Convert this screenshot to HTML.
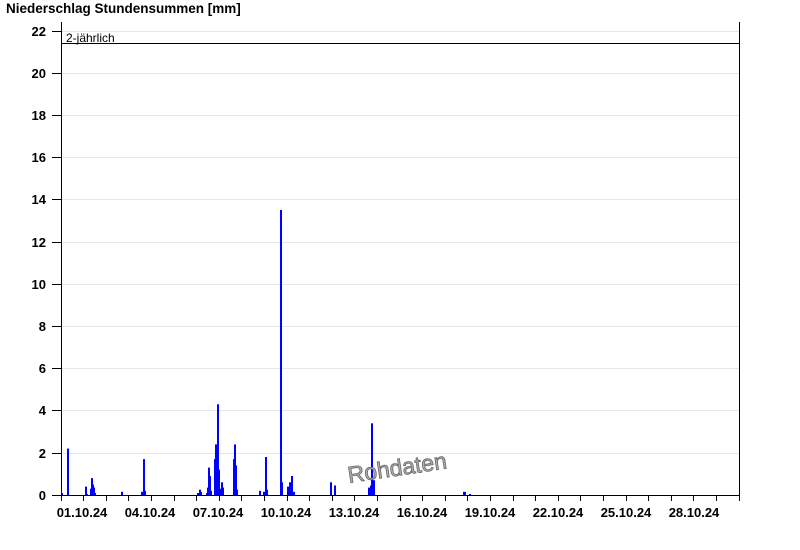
<!DOCTYPE html>
<html><head><meta charset="utf-8"><style>
html,body{margin:0;padding:0;background:#fff;}
svg{display:block;font-family:"Liberation Sans",Arial,sans-serif;}
</style></head><body>
<svg width="800" height="550" viewBox="0 0 800 550" xmlns="http://www.w3.org/2000/svg">
<text x="6" y="13" font-size="13.5" font-weight="bold" fill="#000">Niederschlag Stundensummen [mm]</text>
<g stroke="#e6e6e6" stroke-width="1">
<line x1="61" y1="31.5" x2="739" y2="31.5"/>
<line x1="61" y1="73.5" x2="739" y2="73.5"/>
<line x1="61" y1="115.5" x2="739" y2="115.5"/>
<line x1="61" y1="157.5" x2="739" y2="157.5"/>
<line x1="61" y1="199.5" x2="739" y2="199.5"/>
<line x1="61" y1="242.5" x2="739" y2="242.5"/>
<line x1="61" y1="284.5" x2="739" y2="284.5"/>
<line x1="61" y1="326.5" x2="739" y2="326.5"/>
<line x1="61" y1="368.5" x2="739" y2="368.5"/>
<line x1="61" y1="410.5" x2="739" y2="410.5"/>
<line x1="61" y1="453.5" x2="739" y2="453.5"/>
</g>
<g fill="#0000ff">
<rect x="61" y="493" width="2" height="2"/>
<rect x="67" y="448.6" width="2" height="46.4"/>
<rect x="85" y="486.6" width="2" height="8.4"/>
<rect x="87" y="494" width="1" height="1"/>
<rect x="90" y="488.7" width="1" height="6.3"/>
<rect x="91" y="478.1" width="2" height="16.9"/>
<rect x="93" y="484.5" width="1" height="10.5"/>
<rect x="94" y="487.6" width="1" height="7.4"/>
<rect x="95" y="493" width="1" height="2"/>
<rect x="121" y="491.8" width="2" height="3.2"/>
<rect x="141" y="491.8" width="2" height="3.2"/>
<rect x="143" y="459.1" width="2" height="35.9"/>
<rect x="145" y="490.8" width="1" height="4.2"/>
<rect x="197" y="493" width="2" height="2"/>
<rect x="199" y="489.7" width="2" height="5.3"/>
<rect x="201" y="492" width="1" height="3"/>
<rect x="206" y="493" width="1" height="2"/>
<rect x="207" y="487.6" width="1" height="7.4"/>
<rect x="208" y="467.6" width="2" height="27.4"/>
<rect x="210" y="476" width="1" height="19"/>
<rect x="211" y="490.8" width="1" height="4.2"/>
<rect x="214" y="459.1" width="1" height="35.9"/>
<rect x="215" y="444.4" width="2" height="50.6"/>
<rect x="217" y="404.3" width="2" height="90.7"/>
<rect x="219" y="469.7" width="1" height="25.3"/>
<rect x="220" y="488.7" width="1" height="6.3"/>
<rect x="221" y="482.3" width="2" height="12.7"/>
<rect x="223" y="487.6" width="1" height="7.4"/>
<rect x="233" y="459.1" width="1" height="35.9"/>
<rect x="234" y="444.4" width="2" height="50.6"/>
<rect x="236" y="465.5" width="1" height="29.5"/>
<rect x="237" y="489.7" width="1" height="5.3"/>
<rect x="259" y="490.8" width="2" height="4.2"/>
<rect x="263" y="491.8" width="2" height="3.2"/>
<rect x="265" y="457" width="2" height="38"/>
<rect x="267" y="489.7" width="1" height="5.3"/>
<rect x="280" y="210" width="2" height="285"/>
<rect x="282" y="482.3" width="1" height="12.7"/>
<rect x="287" y="486.6" width="2" height="8.4"/>
<rect x="289" y="482.3" width="2" height="12.7"/>
<rect x="291" y="476" width="2" height="19"/>
<rect x="293" y="491.8" width="2" height="3.2"/>
<rect x="330" y="482.3" width="2" height="12.7"/>
<rect x="334" y="485.5" width="2" height="9.5"/>
<rect x="368" y="487.6" width="2" height="7.4"/>
<rect x="370" y="485.5" width="1" height="9.5"/>
<rect x="371" y="423.3" width="2" height="71.7"/>
<rect x="373" y="480.2" width="2" height="14.8"/>
<rect x="463" y="491.8" width="3" height="3.2"/>
<rect x="469" y="494" width="2" height="1"/>
</g>
<line x1="61" y1="43.5" x2="739" y2="43.5" stroke="#000" stroke-width="1"/>
<text x="66" y="42" font-size="12" fill="#000">2-jährlich</text>
<g stroke="#000" stroke-width="1">
<line x1="61.5" y1="22" x2="61.5" y2="495"/>
<line x1="739.5" y1="22" x2="739.5" y2="495"/>
<line x1="52" y1="495.5" x2="740" y2="495.5"/>
<path d="M52 31.5h9M52 73.5h9M52 115.5h9M52 157.5h9M52 199.5h9M52 242.5h9M52 284.5h9M52 326.5h9M52 368.5h9M52 410.5h9M52 453.5h9"/>
<path d="M61.5 495v6M83.5 495v6M106.5 495v6M128.5 495v6M151.5 495v6M174.5 495v6M196.5 495v6M219.5 495v6M241.5 495v6M264.5 495v6M287.5 495v6M309.5 495v6M332.5 495v6M354.5 495v6M377.5 495v6M400.5 495v6M422.5 495v6M445.5 495v6M467.5 495v6M490.5 495v6M513.5 495v6M535.5 495v6M558.5 495v6M580.5 495v6M603.5 495v6M626.5 495v6M648.5 495v6M671.5 495v6M693.5 495v6M716.5 495v6M739.5 495v6"/>
</g>
<g font-size="13" font-weight="bold" text-anchor="end" fill="#000">
<text x="46" y="36">22</text><text x="46" y="78">20</text><text x="46" y="120">18</text>
<text x="46" y="162">16</text><text x="46" y="204">14</text><text x="46" y="247">12</text>
<text x="46" y="289">10</text><text x="46" y="331">8</text><text x="46" y="373">6</text>
<text x="46" y="415">4</text><text x="46" y="458">2</text><text x="46" y="500">0</text>
</g>
<g font-size="13" font-weight="bold" text-anchor="middle" fill="#000">
<text x="82" y="517">01.10.24</text><text x="150" y="517">04.10.24</text>
<text x="218" y="517">07.10.24</text><text x="286" y="517">10.10.24</text>
<text x="354" y="517">13.10.24</text><text x="422" y="517">16.10.24</text>
<text x="490" y="517">19.10.24</text><text x="558" y="517">22.10.24</text>
<text x="626" y="517">25.10.24</text><text x="694" y="517">28.10.24</text>
</g>
<text x="349" y="483" font-size="23" fill="#b0b0b0" stroke="#666" stroke-width="0.8" transform="rotate(-8.5 349 483)">Rohdaten</text>
</svg>
</body></html>
